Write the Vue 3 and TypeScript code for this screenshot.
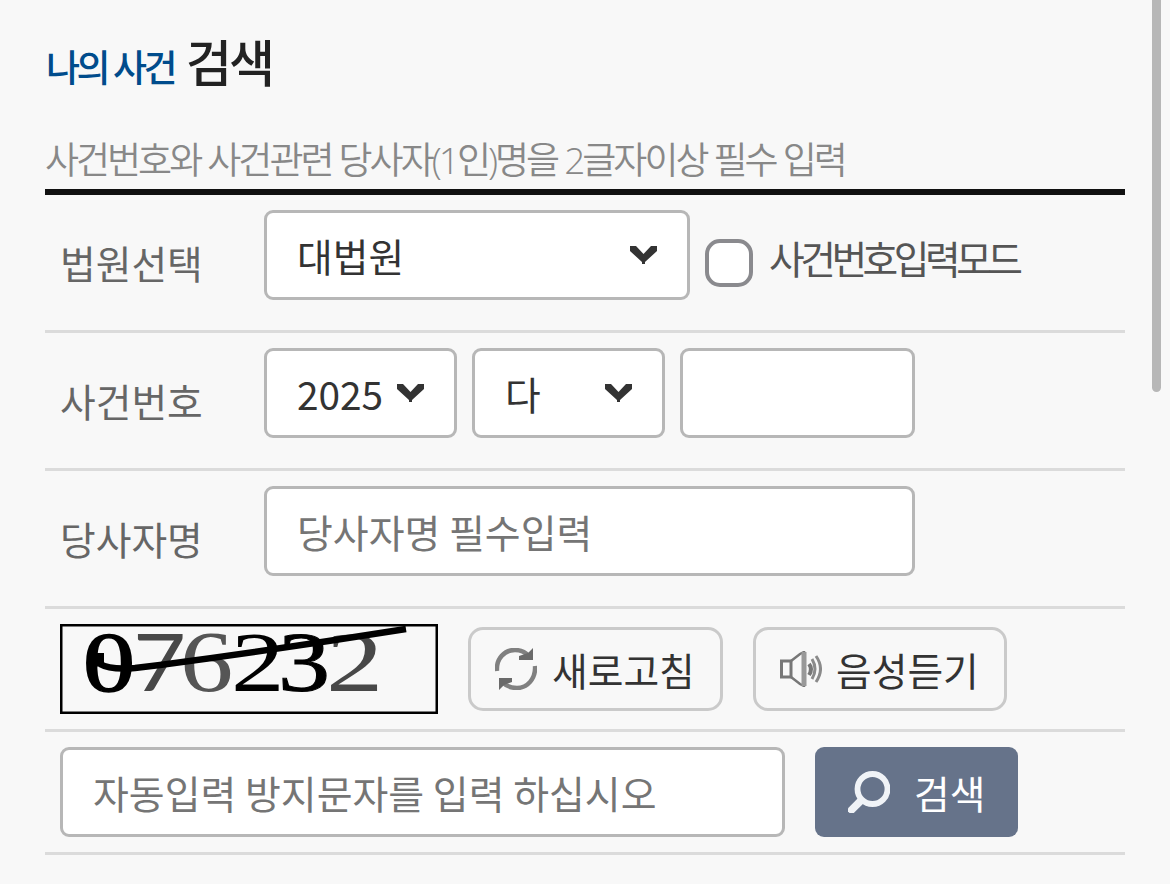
<script setup lang="ts">
import { ref } from 'vue'

interface Digit {
  char: string
  x: number
  scale: number
  tone: string
  family: string
  size: number
  /** extra outline that thickens the glyph */
  bold: number
}

const court = ref('대법원')
const year = ref('2025')
const kind = ref('다')
const serial = ref('')
const party = ref('')
const answer = ref('')
const manualMode = ref(false)

const serif = 'Liberation Serif'
const digits: Digit[] = [
  { char: '0', x: 23, scale: 1.24, tone: '#000', family: serif, size: 84, bold: 1.5 },
  { char: '7', x: 73, scale: 1.16, tone: '#484848', family: 'Lato', size: 79, bold: 0 },
  { char: '6', x: 120, scale: 1.24, tone: '#555', family: serif, size: 86, bold: 0 },
  { char: '2', x: 171, scale: 1.26, tone: '#000', family: serif, size: 85, bold: 0 },
  { char: '3', x: 218, scale: 1.24, tone: '#000', family: serif, size: 84, bold: 1 },
  { char: '2', x: 266, scale: 1.35, tone: '#484848', family: serif, size: 85, bold: 0 },
]
</script>

<template>
  <main class="page">
    <h1 class="title"><span class="title-sub">나의 사건</span><span class="title-main">검색</span></h1>
    <p class="guide">사건번호와 사건관련 당사자(1인)명을 2글자이상 필수 입력</p>

    <form class="form" @submit.prevent>
      <div class="row">
        <span class="label">법원선택</span>
        <button type="button" class="select court">
          <span>{{ court }}</span>
          <svg class="chevron" viewBox="0 0 27 18"><path d="M0 0H6L13.500 8L21 0H27V5L15 16V18H12V16L0 5Z" /></svg>
        </button>
        <label class="mode">
          <input v-model="manualMode" type="checkbox">
          <span>사건번호입력모드</span>
        </label>
      </div>

      <div class="row">
        <span class="label">사건번호</span>
        <button type="button" class="select">
          <span>{{ year }}</span>
          <svg class="chevron" viewBox="0 0 27 18"><path d="M0 0H6L13.500 8L21 0H27V5L15 16V18H12V16L0 5Z" /></svg>
        </button>
        <button type="button" class="select">
          <span>{{ kind }}</span>
          <svg class="chevron" viewBox="0 0 27 18"><path d="M0 0H6L13.500 8L21 0H27V5L15 16V18H12V16L0 5Z" /></svg>
        </button>
        <input v-model="serial" class="field serial" type="text">
      </div>

      <div class="row">
        <span class="label">당사자명</span>
        <input v-model="party" class="field party" type="text" placeholder="당사자명 필수입력">
      </div>

      <div class="row captcha-row">
        <svg class="captcha" viewBox="0 0 378 90">
          <rect x="1.250" y="1.250" width="375.500" height="87.500" fill="#f8f8f8" stroke="#000" stroke-width="2.500" />
          <text
            v-for="(d, i) in digits"
            :key="i"
            :transform="`translate(${d.x} 67) scale(${d.scale} 1)`"
            :fill="d.tone"
            :stroke="d.tone"
            :stroke-width="d.bold"
            :font-family="d.family"
            :font-size="d.size"
          >{{ d.char }}</text>
          <path d="M40 40Q50 46 75 44L100 41Q220 25 346 5" fill="none" stroke="#000" stroke-width="6.500" />
          <path d="M27 29H44V42L32 43Z" />
        </svg>
        <button type="button" class="tool refresh">
          <svg width="42" height="42" viewBox="0 0 42 42">
            <g fill="none" stroke="#808080" stroke-width="4.500">
              <path d="M2 23C1 10 10 2 20 2C26 2 30 4 34 8" />
              <path d="M40 18C41 31 32 40 22 40C16 40 11 38 7 34" />
            </g>
            <path d="M38 0V12H24V8L33 5ZM4 42V30H17V34L9 37Z" fill="#6a6a6a" />
          </svg>
          <span>새로고침</span>
        </button>
        <button type="button" class="tool listen">
          <svg width="42" height="36" viewBox="0 0 42 36">
            <g fill="none" stroke="#777" stroke-width="2.500">
              <path d="M1.500 10H11V26H1.500Z" stroke-width="3" />
              <path d="M11 10L20 3L24 1V35L20 33L11 26" />
              <path d="M24 1V35" stroke="#999" stroke-width="5" />
              <path d="M29 13Q33 18 29 24" stroke-width="4" />
              <path d="M32 8Q38 18 32 28" stroke="#8a8a8a" stroke-width="3" />
              <path d="M36 5Q45 18 36 31" stroke="#8a8a8a" stroke-width="3" />
            </g>
          </svg>
          <span>음성듣기</span>
        </button>
      </div>

      <div class="row answer-row">
        <input v-model="answer" class="field answer" type="text" placeholder="자동입력 방지문자를 입력 하십시오">
        <button type="submit" class="submit">
          <svg width="42" height="42" viewBox="0 0 42 42" fill="none" stroke="#f0f3f7">
            <circle cx="24.500" cy="18" r="15" stroke-width="5.800" />
            <path d="M13.500 29L1 41.500" stroke-width="7.500" />
          </svg>
          <span>검색</span>
        </button>
      </div>
    </form>

    <div class="scrollbar"></div>
  </main>
</template>

<style>
html,
body {
  background: #f8f8f8;
  overflow: hidden;
}
</style>

<style scoped>
.page {
  position: relative;
  height: 884px;
  padding: 0 45px;
  box-sizing: border-box;
  overflow: hidden;
  background: #f8f8f8;
  color: #333;
  font-family: 'Noto Sans CJK KR', sans-serif;
  font-size: 38.8px;
}
.title {
  display: flex;
  align-items: baseline;
  height: 130px;
  margin: 0;
  padding-left: 1px;
  box-sizing: border-box;
  line-height: 120px;
  white-space: nowrap;
}
.title-sub {
  width: 140px;
  color: #004c8c;
  font-size: 37px;
  font-weight: 500;
  letter-spacing: -3.500px;
  word-spacing: 1px;
}
.title-main {
  color: #222;
  font-size: 50px;
  font-weight: 500;
  letter-spacing: -3px;
}
.guide {
  height: 59px;
  margin: 0;
  color: #888;
  font-family: 'Open Sans', 'Noto Sans CJK KR', sans-serif;
  font-size: 37px;
  font-weight: 350;
  line-height: 60px;
  letter-spacing: -3px;
  word-spacing: 0.5px;
  white-space: nowrap;
}
.form {
  border-top: 6px solid #111;
}
.row {
  display: flex;
  align-items: flex-start;
  gap: 15px;
  height: 138px;
  padding: 15px;
  box-sizing: border-box;
  border-bottom: 3px solid #dbdbdb;
}
.label {
  flex: none;
  width: 189px;
  color: #666;
  line-height: 105px;
  white-space: nowrap;
}
button,
input {
  margin: 0;
  box-sizing: border-box;
  color: #333;
  font: inherit;
}
button {
  white-space: nowrap;
}
.select,
.field {
  flex: none;
  height: 90px;
  border: 3px solid #b7b7b7;
  border-radius: 9px;
  background: #fff;
}
.select {
  display: flex;
  align-items: center;
  justify-content: space-between;
  width: 193px;
  padding: 0 30px;
  line-height: 84px;
}
.court {
  width: 426px;
}
.chevron {
  flex: none;
  width: 27px;
  height: 18px;
  fill: #333;
}
.field {
  padding: 0 30px;
  font-size: 38.95px;
  outline: 0;
}
.field::placeholder {
  color: #757575;
  opacity: 1;
}
.serial {
  width: 235px;
}
.party {
  width: 651px;
}
.mode {
  display: flex;
  gap: 16px;
  color: #555;
  line-height: 95px;
  letter-spacing: -4.500px;
  white-space: nowrap;
}
.mode input {
  width: 48px;
  height: 48px;
  margin-top: 29px;
  appearance: none;
  border: 4px solid #8a8a8e;
  border-radius: 15px;
  background: #fff;
}
.captcha-row,
.answer-row {
  gap: 30px;
  height: 123px;
}
.captcha {
  flex: none;
  width: 378px;
  height: 90px;
}
.tool {
  display: flex;
  align-items: center;
  width: 255px;
  height: 84px;
  margin-top: 3px;
  padding: 0 0 0 24px;
  border: 3px solid #cacaca;
  border-radius: 15px;
  background: #f8f8f8;
}
.listen {
  width: 254px;
}
.tool span {
  margin-left: 15px;
  line-height: 78px;
}
.listen span {
  margin-left: 14px;
}
.answer {
  width: 725px;
}
.submit {
  display: flex;
  align-items: center;
  width: 203px;
  height: 90px;
  padding: 0 0 0 33px;
  border: 0;
  border-radius: 9px;
  background: #66738a;
  color: #fff;
}
.submit span {
  margin-left: 24px;
  line-height: 90px;
}
.scrollbar {
  position: absolute;
  top: -10px;
  right: 9px;
  width: 9px;
  height: 402px;
  border-radius: 5px;
  background: #b7b7b7;
}
</style>
